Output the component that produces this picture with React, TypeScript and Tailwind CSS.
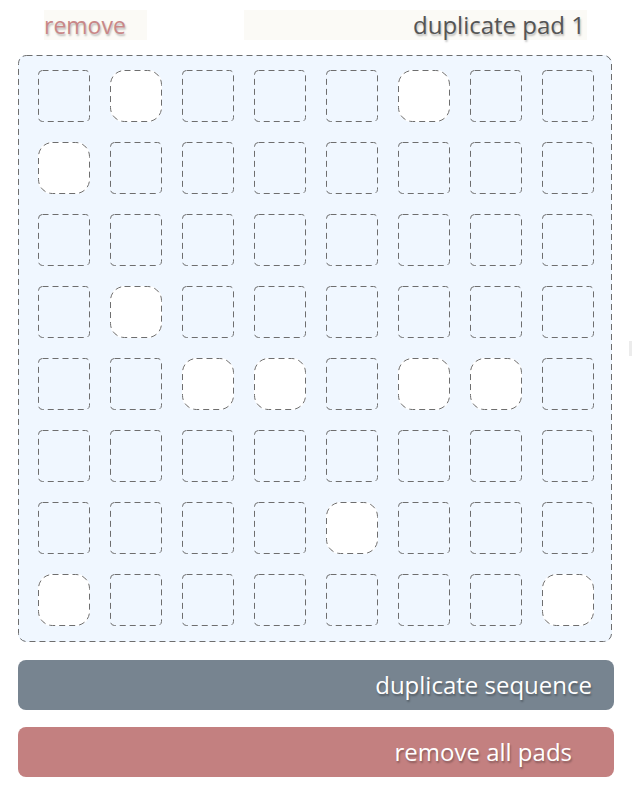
import React from "react";

const active = new Set([
  "0-1", "0-5", "1-0", "3-1", "4-2", "4-3", "4-5", "4-6", "6-4", "7-0", "7-7",
]);

function Dashed({ w, h, r }: { w: number; h: number; r: number }) {
  return (
    <svg
      className="absolute inset-0 pointer-events-none"
      width={w}
      height={h}
      viewBox={`0 0 ${w} ${h}`}
    >
      <rect
        x={0.5}
        y={0.5}
        width={w - 1}
        height={h - 1}
        rx={r}
        ry={r}
        fill="none"
        stroke="#6e6e6e"
        strokeWidth={1}
        strokeDasharray="6 4"
      />
    </svg>
  );
}

export default function App() {
  const rows = Array.from({ length: 8 }, (_, r) => r);
  const cols = Array.from({ length: 8 }, (_, c) => c);
  return (
    <div
      className="relative w-[632px] h-[794px] bg-white overflow-hidden"
      style={{ fontFamily: "'Open Sans', Lato, sans-serif" }}
    >
      <div className="pl-[44px] pt-[10px] flex">
        <div className="w-[103px] h-[30px] bg-[#fbfaf6] text-[#c98787] text-[23px] leading-[30px] [text-shadow:1px_2px_2px_rgba(0,0,0,0.25)]">
          remove
        </div>
        <div className="ml-[97px] w-[343px] h-[30px] bg-[#fbfaf6] text-[#555] text-[24px] leading-[30px] text-right pr-[2px] [text-shadow:1px_2px_2px_rgba(0,0,0,0.25)]">
          duplicate pad 1
        </div>
      </div>
      <div className="relative ml-[18px] mt-[15px] w-[594px] h-[587px] rounded-[8px] bg-[#f0f7ff] pl-[20px] pt-[15px]">
        <Dashed w={594} h={587} r={8} />
        <div className="grid grid-cols-[repeat(8,52px)] gap-x-[20px] gap-y-[20px]">
          {rows.map((r) =>
            cols.map((c) => {
              const on = active.has(`${r}-${c}`);
              return (
                <div
                  key={`${r}-${c}`}
                  className={
                    on
                      ? "relative w-[52px] h-[52px] rounded-[14px] bg-white"
                      : "relative w-[52px] h-[52px] rounded-[4px]"
                  }
                >
                  <Dashed w={52} h={52} r={on ? 14 : 4} />
                </div>
              );
            })
          )}
        </div>
      </div>
      <div className="ml-[18px] mt-[18px] w-[596px] h-[50px] rounded-[8px] bg-[#778490] text-white text-[24px] leading-[50px] text-right pr-[22px] [text-shadow:1px_2px_2px_rgba(0,0,0,0.3)]">
        duplicate sequence
      </div>
      <div className="ml-[18px] mt-[17px] w-[596px] h-[50px] rounded-[8px] bg-[#c38080] text-white text-[24px] leading-[50px] text-right pr-[42px] [text-shadow:1px_2px_2px_rgba(0,0,0,0.3)]">
        remove all pads
      </div>
      <div className="absolute left-[629px] top-[341px] w-[3px] h-[15px] bg-[#ececec]" />
    </div>
  );
}
